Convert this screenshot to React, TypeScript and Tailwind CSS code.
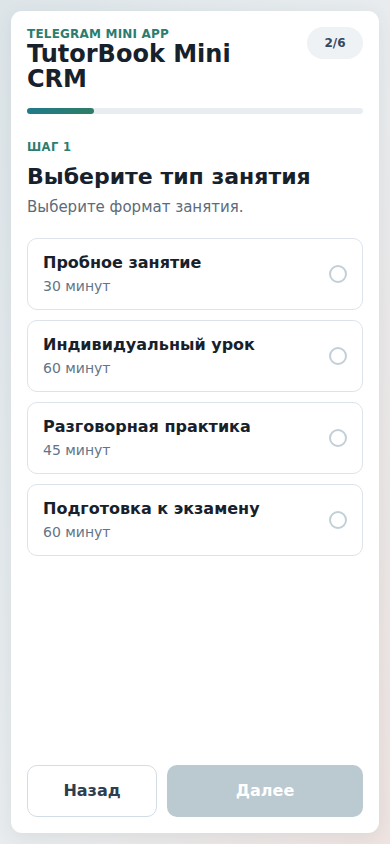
const options = [
  { title: 'Пробное занятие', duration: '30 минут' },
  { title: 'Индивидуальный урок', duration: '60 минут' },
  { title: 'Разговорная практика', duration: '45 минут' },
  { title: 'Подготовка к экзамену', duration: '60 минут' },
];

export default function App() {
  return (
    <div
      className="h-[844px] w-[390px] bg-gradient-to-br from-[#dde5e9] via-[#e8ecee] to-[#eee3e0] p-[11px]"
      style={{ fontFamily: '"DejaVu Sans", sans-serif' }}
    >
      <div className="flex h-full flex-col rounded-[11px] bg-white px-4 pb-4 pt-[16px] shadow-[0_4px_18px_rgba(40,60,80,0.08)]">
        <div className="flex items-start justify-between">
          <div>
            <div className="text-[12px] font-bold leading-[14px] tracking-[0.2px] text-[#2b7d70]">TELEGRAM MINI APP</div>
            <h1 className="mt-[1px] w-[230px] text-[24px] font-bold leading-[25px] text-[#17212b]">TutorBook Mini CRM</h1>
          </div>
          <div className="flex h-8 w-14 items-center justify-center rounded-full bg-[#eef2f5] text-[12px] font-bold text-[#34495e]">
            2/6
          </div>
        </div>

        <div className="mt-[16px] h-[6px] w-full rounded-full bg-[#e9edf1]">
          <div className="h-full w-[20%] rounded-full bg-gradient-to-r from-[#217a8a] to-[#2e7d66]" />
        </div>

        <div className="mt-[27px] text-[11.5px] font-bold leading-[13px] tracking-[0.4px] text-[#2b7d70]">ШАГ 1</div>
        <h2 className="mt-[9px] text-[22px] font-bold leading-[28px] text-[#17212b]">Выберите тип занятия</h2>
        <p className="mt-[6px] text-[15px] leading-[20px] text-[#5b6b7b]">Выберите формат занятия.</p>

        <div className="mt-[21px] flex flex-col gap-[10px]">
          {options.map((o) => (
            <button
              key={o.title}
              type="button"
              className="flex h-[72px] items-center justify-between rounded-[10px] border border-[#dde3ea] bg-white pl-[15px] pr-[15px] text-left"
            >
              <div>
                <div className="text-[16px] font-bold leading-[20px] text-[#17212b]">{o.title}</div>
                <div className="mt-[4px] text-[14px] leading-[18px] text-[#637487]">{o.duration}</div>
              </div>
              <span className="block h-[18px] w-[18px] rounded-full border-2 border-[#c3cfd7]" />
            </button>
          ))}
        </div>

        <div className="mt-auto flex gap-[10px]">
          <button
            type="button"
            className="h-[52px] w-[130px] shrink-0 rounded-[10px] border border-[#d3dde5] bg-white text-[16px] font-bold text-[#2c3e50]"
          >
            Назад
          </button>
          <button
            type="button"
            className="h-[52px] flex-1 rounded-[10px] bg-[#bbc9d0] text-[16px] font-bold text-white"
          >
            Далее
          </button>
        </div>
      </div>
    </div>
  );
}
